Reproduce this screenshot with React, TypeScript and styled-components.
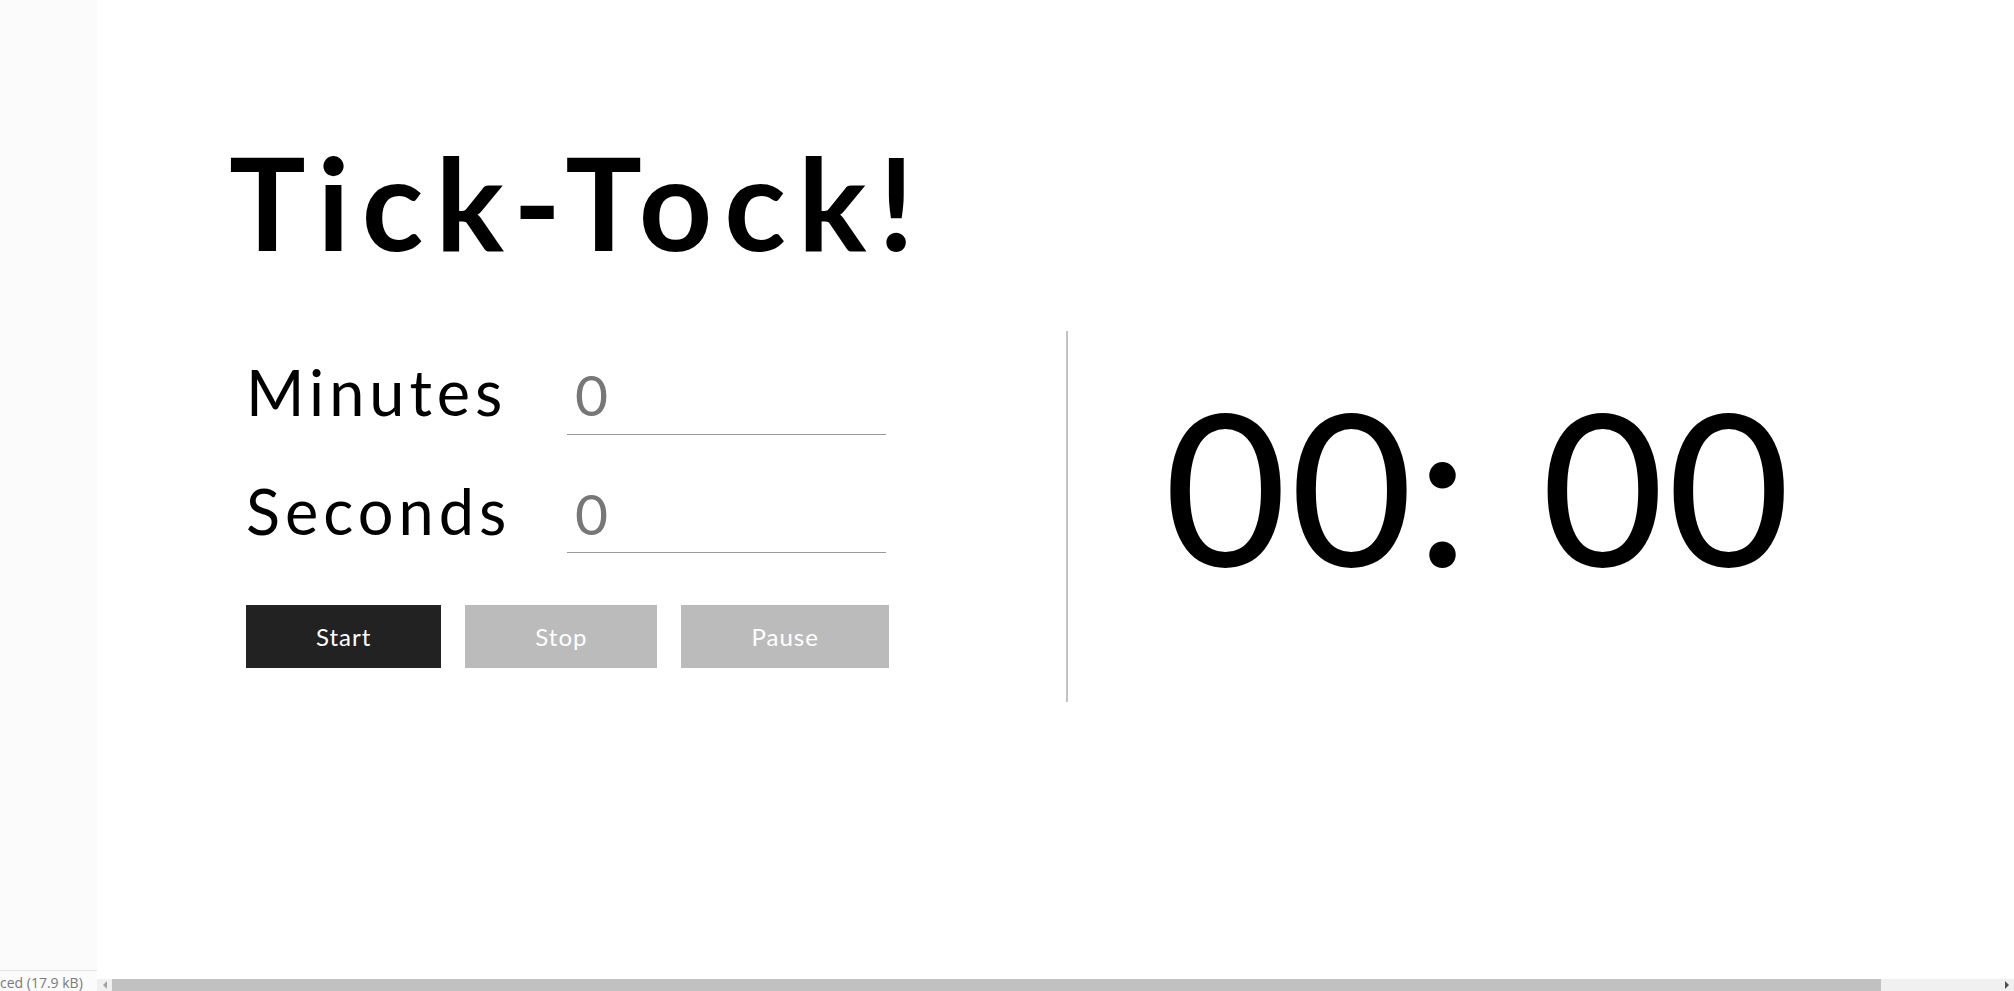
import React from "react";
import styled, { createGlobalStyle } from "styled-components";

const GlobalStyle = createGlobalStyle`
  html, body {
    margin: 0;
    padding: 0;
    height: 100%;
    overflow: hidden;
    background: #ffffff;
  }
  #root {
    height: 100%;
  }
  * {
    box-sizing: border-box;
  }
`;

const Page = styled.div`
  display: flex;
  width: 100vw;
  height: 100vh;
  font-family: "Lato", "Noto Sans", sans-serif;
  color: #000;
`;

const Sidebar = styled.aside`
  width: 97px;
  flex: none;
  display: flex;
  flex-direction: column;
  background: #fbfbfb;
`;

const SidebarFill = styled.div`
  flex: 1;
`;

const StatusLine = styled.div`
  height: 21px;
  border-top: 1px solid #e4e4e4;
  padding-top: 2px;
  font-family: "Open Sans", "Noto Sans", sans-serif;
  font-size: 14px;
  line-height: 19px;
  color: #7a7a7a;
  white-space: nowrap;
  overflow: hidden;
`;

const Main = styled.main`
  flex: 1;
  min-width: 0;
  display: flex;
  flex-direction: column;
  background: #ffffff;
`;

const Content = styled.section`
  flex: 1;
  padding: 138px 0 0 132px;
  overflow: hidden;
`;

const Title = styled.h1`
  margin: 0;
  font-family: "Lato", sans-serif;
  font-weight: 700;
  font-size: 128px;
  line-height: 1;
  letter-spacing: 12px;
`;

const Panels = styled.div`
  display: flex;
  margin: 65px 0 0 17px;
`;

const Controls = styled.div`
  width: 820px;
  padding-top: 29px;
  display: flex;
  flex-direction: column;
`;

const FieldRow = styled.label`
  display: flex;
  align-items: baseline;
  & + & {
    margin-top: 44px;
  }
`;

const FieldLabel = styled.span`
  width: 321px;
  flex: none;
  font-size: 63px;
  line-height: 1;
  letter-spacing: 5px;
  margin-left: 0;
`;

const NumberInput = styled.input`
  width: 319px;
  height: 69px;
  padding: 0 0 11px 8px;
  border: none;
  border-bottom: 1px solid #9a9a9a;
  outline: none;
  background: transparent;
  font-family: "Lato", sans-serif;
  font-size: 57px;
  line-height: 1;
  color: #777777;
`;

const ButtonRow = styled.div`
  display: flex;
  gap: 24px;
  margin-top: 52px;
`;

const ActionButton = styled.button<{ $primary?: boolean }>`
  height: 63px;
  padding: 0 70px;
  border: none;
  background: ${(p) => (p.$primary ? "#222222" : "#bbbbbb")};
  color: #ffffff;
  font-family: "Lato", sans-serif;
  font-size: 24px;
  letter-spacing: 1px;
  cursor: pointer;
`;

const ClockPanel = styled.div`
  height: 371px;
  flex: 1;
  border-left: 2px solid #c2c2c2;
  padding: 47px 0 0 96px;
`;

const Clock = styled.div`
  font-family: "Lato", sans-serif;
  font-weight: 400;
  font-size: 212px;
  line-height: 1;
  letter-spacing: 3px;
  word-spacing: 12px;
  white-space: pre;
`;

const HScrollbar = styled.div`
  height: 12px;
  flex: none;
  display: flex;
  align-items: stretch;
  background: #f0f0f0;
`;

const ArrowButton = styled.div<{ $dir: "left" | "right"; $active?: boolean }>`
  width: 15px;
  flex: none;
  display: flex;
  align-items: center;
  justify-content: center;
  &::before {
    content: "";
    width: 0;
    height: 0;
    border-top: 4px solid transparent;
    border-bottom: 4px solid transparent;
    ${(p) =>
      p.$dir === "left"
        ? `border-right: 4px solid ${p.$active ? "#505050" : "#a3a3a3"};`
        : `border-left: 4px solid ${p.$active ? "#505050" : "#a3a3a3"};`}
  }
`;

const ScrollTrack = styled.div`
  flex: 1;
  display: flex;
  align-items: stretch;
`;

const ScrollThumb = styled.div`
  background: #c1c1c1;
`;

export default function App() {
  const thumbWidth = 1769;
  return (
    <>
      <GlobalStyle />
      <Page>
        <Sidebar>
          <SidebarFill />
          <StatusLine>ced (17.9 kB)</StatusLine>
        </Sidebar>
        <Main>
          <Content>
            <Title>Tick-Tock!</Title>
            <Panels>
              <Controls>
                <FieldRow>
                  <FieldLabel>Minutes</FieldLabel>
                  <NumberInput type="text" defaultValue="0" />
                </FieldRow>
                <FieldRow>
                  <FieldLabel>Seconds</FieldLabel>
                  <NumberInput type="text" defaultValue="0" />
                </FieldRow>
                <ButtonRow>
                  <ActionButton $primary>Start</ActionButton>
                  <ActionButton>Stop</ActionButton>
                  <ActionButton>Pause</ActionButton>
                </ButtonRow>
              </Controls>
              <ClockPanel>
                <Clock>00: 00</Clock>
              </ClockPanel>
            </Panels>
          </Content>
          <HScrollbar>
            <ArrowButton $dir="left" />
            <ScrollTrack>
              <ScrollThumb style={{ width: thumbWidth }} />
            </ScrollTrack>
            <ArrowButton $dir="right" $active />
          </HScrollbar>
        </Main>
      </Page>
    </>
  );
}
